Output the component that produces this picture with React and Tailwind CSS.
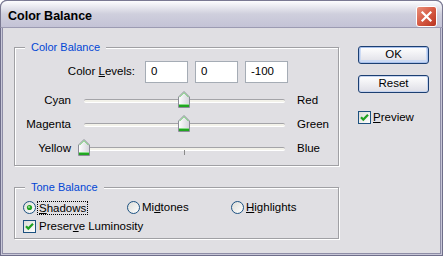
import React from 'react';

const Thumb = () => (
    <svg width="12" height="17" viewBox="0 0 12 17">
        <defs>
            <linearGradient id="thumbFace" x1="0" x2="1" y1="0" y2="0">
                <stop offset="0" stopColor="#ffffff" />
                <stop offset="1" stopColor="#d4d4dc" />
            </linearGradient>
        </defs>
        <path d="M0.5 6 L6 0.5 L11.5 6 L11.5 16.5 L0.5 16.5 Z" fill="url(#thumbFace)" stroke="#8c8c98" />
        <path d="M1.5 6.2 L6 1.7 L10.5 6.2" fill="none" stroke="#72d272" />
        <rect x="1" y="13" width="10" height="3" fill="#21a621" />
        <rect x="1" y="13" width="10" height="1" fill="#86dc86" />
    </svg>
);

// value -100..100 on a 200px track
const Slider = ({ value }) => {
    const left = ((value + 100) / 200) * 200 - 6;
    return (
        <div className="relative w-[201px] h-[24px]">
            <div className="absolute left-0 right-0 top-[10px] h-[4px] rounded-[2px] bg-[#f3f2ea] border-t border-t-[#a4a4a8] border-b border-b-white" />
            <div className="absolute left-[100px] top-[13px] w-px h-[5px] bg-[#8a8a8a]" />
            <div className="absolute top-[2px]" style={{ left }}>
                <Thumb />
            </div>
        </div>
    );
};

const Check = () => (
    <div className="w-[13px] h-[13px] border border-[#1c5180] bg-gradient-to-br from-[#dcdcd7] to-white flex items-center justify-center">
        <svg width="11" height="11" viewBox="0 0 11 11">
            <path d="M2 5.2 L4.3 7.6 L9 2.8" fill="none" stroke="#21a121" strokeWidth="2.2" />
        </svg>
    </div>
);

const Radio = ({ checked }) => (
    <svg width="13" height="13" viewBox="0 0 13 13">
        <defs>
            <linearGradient id="radioFace" x1="0" x2="1" y1="0" y2="1">
                <stop offset="0" stopColor="#dcdcd7" />
                <stop offset="1" stopColor="#ffffff" />
            </linearGradient>
        </defs>
        <circle cx="6.5" cy="6.5" r="6" fill="url(#radioFace)" stroke="#1c5180" />
        {checked && <circle cx="6.5" cy="6.5" r="2.6" fill="#21a121" />}
        {checked && <circle cx="6" cy="6" r="1" fill="#9ee09e" />}
    </svg>
);

const Group = ({ label, className, children }) => (
    <div className={`relative border border-[#a0a0a4] shadow-[1px_1px_0_#ffffff,inset_1px_1px_0_#ffffff] ${className}`}>
        <span className="absolute left-[10px] top-[-8px] px-[6px] bg-[#e0dfe3] text-[#0046d5] text-[11px] leading-[14px]">
            {label}
        </span>
        {children}
    </div>
);

const SliderRow = ({ left, right, value }) => (
    <div className="flex items-center h-[24px]">
        <span className="w-[56px] text-right">{left}</span>
        <div className="ml-[13px]">
            <Slider value={value} />
        </div>
        <span className="ml-[12px]">{right}</span>
    </div>
);

const LevelBox = ({ value }) => (
    <div className="w-[43px] h-[22px] border border-[#a5acb5] bg-white pl-[5px] flex items-center">{value}</div>
);

const XpButton = ({ children, isDefault }) => (
    <button
        className={`w-[71px] h-[18px] rounded-[3px] border border-[#1c3f72] bg-gradient-to-b from-white to-[#dedee6] flex items-center justify-center leading-none ${isDefault ? 'shadow-[inset_0_0_0_1px_#a9c1ec,inset_0_-1px_0_2px_#cddbf4]' : 'shadow-[inset_0_0_0_1px_#c6d4ef]'}`}
    >
        {children}
    </button>
);

export default function App() {
    return (
        <div className="w-[443px] h-[256px] flex flex-col rounded-t-[7px] overflow-hidden bg-[#e0dfe3] text-[11.5px] text-black font-['Liberation_Sans',Arial,sans-serif] shadow-[inset_0_0_0_1px_#6f6e8a,inset_0_0_0_2px_#c8c7d8,inset_0_0_0_3px_#8e8da6]">
            {/* Title bar */}
            <div className="h-[28px] shrink-0 flex items-start justify-between pl-[7px] pr-[5px] pt-[5px] rounded-t-[7px] border border-[#7a7992] border-b-[#9c9bb2] bg-gradient-to-b from-[#fdfdfe] via-[#cfcfdd] to-[#c4c3d6]">
                <span className="mt-[2px] text-[12.5px] font-bold leading-[16px]">Color Balance</span>
                <div className="w-[21px] h-[21px] rounded-[3px] border border-white bg-gradient-to-br from-[#e8907a] via-[#d65a44] to-[#b8321f] flex items-center justify-center">
                    <svg width="13" height="13" viewBox="0 0 13 13">
                        <path d="M2.5 2.5 L10.5 10.5 M10.5 2.5 L2.5 10.5" stroke="#ffffff" strokeWidth="2.2" strokeLinecap="square" />
                    </svg>
                </div>
            </div>

            {/* Body */}
            <div className="flex pl-[14px]">
                <div className="w-[325px]">
                    <Group label="Color Balance" className="mt-[19px] h-[119px] pt-[13px]">
                        <div className="flex items-center h-[22px]">
                            <span className="w-[120px] text-right">
                                Color <span className="underline">L</span>evels:
                            </span>
                            <div className="ml-[10px] flex gap-[7px]">
                                <LevelBox value="0" />
                                <LevelBox value="0" />
                                <LevelBox value="-100" />
                            </div>
                        </div>
                        <div className="mt-[6px]">
                            <SliderRow left="Cyan" right="Red" value={0} />
                            <SliderRow left="Magenta" right="Green" value={0} />
                            <SliderRow left="Yellow" right="Blue" value={-100} />
                        </div>
                    </Group>

                    <Group label="Tone Balance" className="mt-[21px] h-[52px] pt-[10px] pl-[8px]">
                        <div className="flex items-center h-[19px]">
                            <div className="w-[104px] flex items-center">
                                <Radio checked />
                                <span className="ml-[1px] px-[1px] border border-dotted border-black leading-[12px]">
                                    <span className="underline">S</span>hadows
                                </span>
                            </div>
                            <div className="w-[104px] flex items-center">
                                <Radio />
                                <span className="ml-[2px]">
                                    Mi<span className="underline">d</span>tones
                                </span>
                            </div>
                            <div className="flex items-center">
                                <Radio />
                                <span className="ml-[2px]">
                                    <span className="underline">H</span>ighlights
                                </span>
                            </div>
                        </div>
                        <div className="flex items-center h-[19px]">
                            <Check />
                            <span className="ml-[3px]">
                                Preser<span className="underline">v</span>e Luminosity
                            </span>
                        </div>
                    </Group>
                </div>

                <div className="ml-[19px] pt-[18px] flex flex-col">
                    <XpButton isDefault>OK</XpButton>
                    <div className="mt-[11px]">
                        <XpButton>Reset</XpButton>
                    </div>
                    <div className="mt-[16px] flex items-center">
                        <Check />
                        <span className="ml-[2px]">
                            <span className="underline">P</span>review
                        </span>
                    </div>
                </div>
            </div>
        </div>
    );
}
